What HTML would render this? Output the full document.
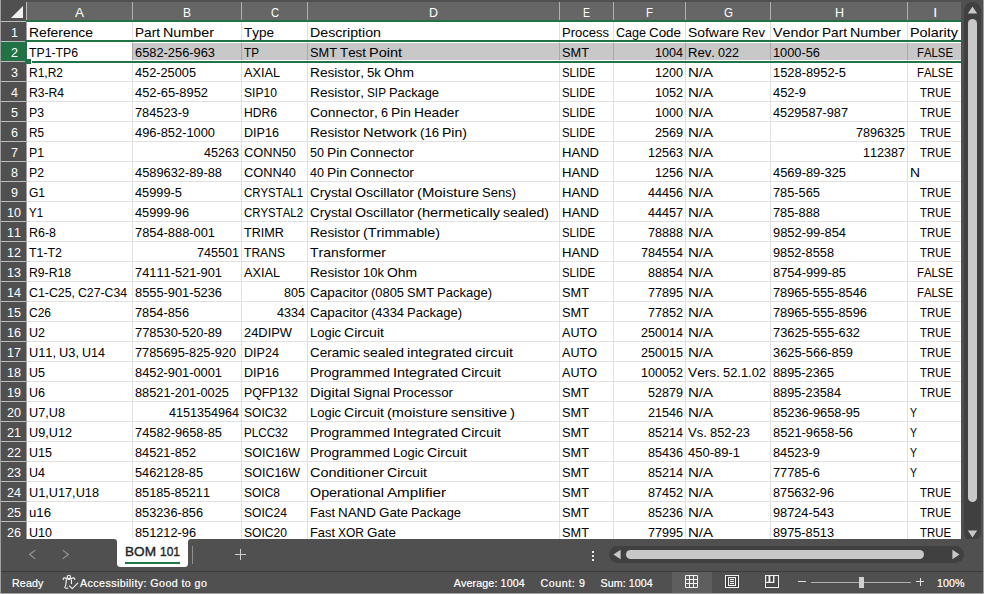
<!DOCTYPE html>
<html lang="en"><head><meta charset="utf-8"><title>BOM 101 - Excel</title>
<style>
html,body{margin:0;padding:0;}
body{width:984px;height:594px;overflow:hidden;position:relative;background:#505050;font-family:"Liberation Sans",sans-serif;}
.abs,.abs *{position:absolute;}
#app{position:absolute;left:0;top:0;width:984px;height:594px;overflow:hidden;background:#505050;}
#app div,#app svg{position:absolute;box-sizing:border-box;}
.ch{top:2px;height:18px;background:#666;color:#fff;font-size:13.4px;line-height:22px;text-align:center;font-kerning:none;}
.rh{left:1px;width:25px;padding-left:1px;height:19px;background:#505050;color:#fff;font-size:13.4px;line-height:21px;text-align:center;font-kerning:none;}
.c{height:19px;line-height:21px;font-size:13.4px;color:#000;white-space:pre;font-kerning:none;word-spacing:-0.719px;}

.w{display:inline-block;transform-origin:0 0;}
.st{color:#fff;-webkit-text-stroke:0.2px #fff;font-size:10.7px;line-height:22px;top:572px;height:22px;white-space:pre;font-kerning:none;}
</style></head><body><div id="app">

<div style="left:27px;top:22px;width:934px;height:517px;background:#fff"></div>
<div class="ch" style="left:27px;width:105px"><span class="w" style="width:9px;transform:scaleX(1.0070)">A</span></div>
<div style="left:132px;top:2px;width:1px;height:18px;background:#b0b0b0"></div>
<div class="ch" style="left:133px;width:108px"><span class="w" style="width:8px;transform:scaleX(0.8951)">B</span></div>
<div style="left:241px;top:2px;width:1px;height:18px;background:#b0b0b0"></div>
<div class="ch" style="left:242px;width:65px"><span class="w" style="width:8px;transform:scaleX(0.8271)">C</span></div>
<div style="left:307px;top:2px;width:1px;height:18px;background:#b0b0b0"></div>
<div class="ch" style="left:308px;width:251px"><span class="w" style="width:9px;transform:scaleX(0.9305)">D</span></div>
<div style="left:559px;top:2px;width:1px;height:18px;background:#b0b0b0"></div>
<div class="ch" style="left:560px;width:53px"><span class="w" style="width:7px;transform:scaleX(0.7832)">E</span></div>
<div style="left:613px;top:2px;width:1px;height:18px;background:#b0b0b0"></div>
<div class="ch" style="left:614px;width:71px"><span class="w" style="width:7px;transform:scaleX(0.8550)">F</span></div>
<div style="left:685px;top:2px;width:1px;height:18px;background:#b0b0b0"></div>
<div class="ch" style="left:686px;width:84px"><span class="w" style="width:9px;transform:scaleX(0.8636)">G</span></div>
<div style="left:770px;top:2px;width:1px;height:18px;background:#b0b0b0"></div>
<div class="ch" style="left:771px;width:136px"><span class="w" style="width:9px;transform:scaleX(0.9305)">H</span></div>
<div style="left:907px;top:2px;width:1px;height:18px;background:#b0b0b0"></div>
<div class="ch" style="left:908px;width:53px"><span class="w" style="width:4px;transform:scaleX(1.0711)">I</span></div>
<div style="left:26px;top:2px;width:1px;height:20px;background:#bdbdbd"></div>
<div style="left:26px;top:22px;width:1px;height:517px;background:#a0a0a0"></div>
<div style="left:1px;top:21px;width:25px;height:1px;background:#bdbdbd"></div>
<svg style="left:10px;top:5px" width="14" height="14" viewBox="0 0 14 14"><polygon points="13,1 13,13 1,13" fill="#f0f0f0"/></svg>
<div style="left:132px;top:43px;width:829px;height:17px;background:#c8c8c8"></div>
<div style="left:132px;top:22px;width:1px;height:517px;background:#e1e1e1"></div>
<div style="left:132px;top:43px;width:1px;height:17px;background:#a8a8a8"></div>
<div style="left:241px;top:22px;width:1px;height:517px;background:#e1e1e1"></div>
<div style="left:241px;top:43px;width:1px;height:17px;background:#a8a8a8"></div>
<div style="left:307px;top:22px;width:1px;height:517px;background:#e1e1e1"></div>
<div style="left:307px;top:43px;width:1px;height:17px;background:#a8a8a8"></div>
<div style="left:559px;top:22px;width:1px;height:517px;background:#e1e1e1"></div>
<div style="left:559px;top:43px;width:1px;height:17px;background:#a8a8a8"></div>
<div style="left:613px;top:22px;width:1px;height:517px;background:#e1e1e1"></div>
<div style="left:613px;top:43px;width:1px;height:17px;background:#a8a8a8"></div>
<div style="left:685px;top:22px;width:1px;height:517px;background:#e1e1e1"></div>
<div style="left:685px;top:43px;width:1px;height:17px;background:#a8a8a8"></div>
<div style="left:770px;top:22px;width:1px;height:517px;background:#e1e1e1"></div>
<div style="left:770px;top:43px;width:1px;height:17px;background:#a8a8a8"></div>
<div style="left:907px;top:22px;width:1px;height:517px;background:#e1e1e1"></div>
<div style="left:907px;top:43px;width:1px;height:17px;background:#a8a8a8"></div>
<div class="rh" style="top:22px;background:#505050"><span class="w" style="width:7px;transform:scaleX(0.9392)">1</span></div>
<div style="left:1px;top:41px;width:25px;height:1px;background:#bdbdbd"></div>
<div style="left:27px;top:41px;width:934px;height:1px;background:#e1e1e1"></div>
<div class="rh" style="top:42px;background:#217346"><span class="w" style="width:7px;transform:scaleX(0.9392)">2</span></div>
<div style="left:1px;top:61px;width:25px;height:1px;background:#bdbdbd"></div>
<div style="left:27px;top:61px;width:934px;height:1px;background:#e1e1e1"></div>
<div class="rh" style="top:62px;background:#505050"><span class="w" style="width:7px;transform:scaleX(0.9392)">3</span></div>
<div style="left:1px;top:81px;width:25px;height:1px;background:#bdbdbd"></div>
<div style="left:27px;top:81px;width:934px;height:1px;background:#e1e1e1"></div>
<div class="rh" style="top:82px;background:#505050"><span class="w" style="width:7px;transform:scaleX(0.9392)">4</span></div>
<div style="left:1px;top:101px;width:25px;height:1px;background:#bdbdbd"></div>
<div style="left:27px;top:101px;width:934px;height:1px;background:#e1e1e1"></div>
<div class="rh" style="top:102px;background:#505050"><span class="w" style="width:7px;transform:scaleX(0.9392)">5</span></div>
<div style="left:1px;top:121px;width:25px;height:1px;background:#bdbdbd"></div>
<div style="left:27px;top:121px;width:934px;height:1px;background:#e1e1e1"></div>
<div class="rh" style="top:122px;background:#505050"><span class="w" style="width:7px;transform:scaleX(0.9392)">6</span></div>
<div style="left:1px;top:141px;width:25px;height:1px;background:#bdbdbd"></div>
<div style="left:27px;top:141px;width:934px;height:1px;background:#e1e1e1"></div>
<div class="rh" style="top:142px;background:#505050"><span class="w" style="width:7px;transform:scaleX(0.9392)">7</span></div>
<div style="left:1px;top:161px;width:25px;height:1px;background:#bdbdbd"></div>
<div style="left:27px;top:161px;width:934px;height:1px;background:#e1e1e1"></div>
<div class="rh" style="top:162px;background:#505050"><span class="w" style="width:7px;transform:scaleX(0.9392)">8</span></div>
<div style="left:1px;top:181px;width:25px;height:1px;background:#bdbdbd"></div>
<div style="left:27px;top:181px;width:934px;height:1px;background:#e1e1e1"></div>
<div class="rh" style="top:182px;background:#505050"><span class="w" style="width:7px;transform:scaleX(0.9392)">9</span></div>
<div style="left:1px;top:201px;width:25px;height:1px;background:#bdbdbd"></div>
<div style="left:27px;top:201px;width:934px;height:1px;background:#e1e1e1"></div>
<div class="rh" style="top:202px;background:#505050"><span class="w" style="width:14px;transform:scaleX(0.9392)">10</span></div>
<div style="left:1px;top:221px;width:25px;height:1px;background:#bdbdbd"></div>
<div style="left:27px;top:221px;width:934px;height:1px;background:#e1e1e1"></div>
<div class="rh" style="top:222px;background:#505050"><span class="w" style="width:14px;transform:scaleX(0.9392)">11</span></div>
<div style="left:1px;top:241px;width:25px;height:1px;background:#bdbdbd"></div>
<div style="left:27px;top:241px;width:934px;height:1px;background:#e1e1e1"></div>
<div class="rh" style="top:242px;background:#505050"><span class="w" style="width:14px;transform:scaleX(0.9392)">12</span></div>
<div style="left:1px;top:261px;width:25px;height:1px;background:#bdbdbd"></div>
<div style="left:27px;top:261px;width:934px;height:1px;background:#e1e1e1"></div>
<div class="rh" style="top:262px;background:#505050"><span class="w" style="width:14px;transform:scaleX(0.9392)">13</span></div>
<div style="left:1px;top:281px;width:25px;height:1px;background:#bdbdbd"></div>
<div style="left:27px;top:281px;width:934px;height:1px;background:#e1e1e1"></div>
<div class="rh" style="top:282px;background:#505050"><span class="w" style="width:14px;transform:scaleX(0.9392)">14</span></div>
<div style="left:1px;top:301px;width:25px;height:1px;background:#bdbdbd"></div>
<div style="left:27px;top:301px;width:934px;height:1px;background:#e1e1e1"></div>
<div class="rh" style="top:302px;background:#505050"><span class="w" style="width:14px;transform:scaleX(0.9392)">15</span></div>
<div style="left:1px;top:321px;width:25px;height:1px;background:#bdbdbd"></div>
<div style="left:27px;top:321px;width:934px;height:1px;background:#e1e1e1"></div>
<div class="rh" style="top:322px;background:#505050"><span class="w" style="width:14px;transform:scaleX(0.9392)">16</span></div>
<div style="left:1px;top:341px;width:25px;height:1px;background:#bdbdbd"></div>
<div style="left:27px;top:341px;width:934px;height:1px;background:#e1e1e1"></div>
<div class="rh" style="top:342px;background:#505050"><span class="w" style="width:14px;transform:scaleX(0.9392)">17</span></div>
<div style="left:1px;top:361px;width:25px;height:1px;background:#bdbdbd"></div>
<div style="left:27px;top:361px;width:934px;height:1px;background:#e1e1e1"></div>
<div class="rh" style="top:362px;background:#505050"><span class="w" style="width:14px;transform:scaleX(0.9392)">18</span></div>
<div style="left:1px;top:381px;width:25px;height:1px;background:#bdbdbd"></div>
<div style="left:27px;top:381px;width:934px;height:1px;background:#e1e1e1"></div>
<div class="rh" style="top:382px;background:#505050"><span class="w" style="width:14px;transform:scaleX(0.9392)">19</span></div>
<div style="left:1px;top:401px;width:25px;height:1px;background:#bdbdbd"></div>
<div style="left:27px;top:401px;width:934px;height:1px;background:#e1e1e1"></div>
<div class="rh" style="top:402px;background:#505050"><span class="w" style="width:14px;transform:scaleX(0.9392)">20</span></div>
<div style="left:1px;top:421px;width:25px;height:1px;background:#bdbdbd"></div>
<div style="left:27px;top:421px;width:934px;height:1px;background:#e1e1e1"></div>
<div class="rh" style="top:422px;background:#505050"><span class="w" style="width:14px;transform:scaleX(0.9392)">21</span></div>
<div style="left:1px;top:441px;width:25px;height:1px;background:#bdbdbd"></div>
<div style="left:27px;top:441px;width:934px;height:1px;background:#e1e1e1"></div>
<div class="rh" style="top:442px;background:#505050"><span class="w" style="width:14px;transform:scaleX(0.9392)">22</span></div>
<div style="left:1px;top:461px;width:25px;height:1px;background:#bdbdbd"></div>
<div style="left:27px;top:461px;width:934px;height:1px;background:#e1e1e1"></div>
<div class="rh" style="top:462px;background:#505050"><span class="w" style="width:14px;transform:scaleX(0.9392)">23</span></div>
<div style="left:1px;top:481px;width:25px;height:1px;background:#bdbdbd"></div>
<div style="left:27px;top:481px;width:934px;height:1px;background:#e1e1e1"></div>
<div class="rh" style="top:482px;background:#505050"><span class="w" style="width:14px;transform:scaleX(0.9392)">24</span></div>
<div style="left:1px;top:501px;width:25px;height:1px;background:#bdbdbd"></div>
<div style="left:27px;top:501px;width:934px;height:1px;background:#e1e1e1"></div>
<div class="rh" style="top:502px;background:#505050"><span class="w" style="width:14px;transform:scaleX(0.9392)">25</span></div>
<div style="left:1px;top:521px;width:25px;height:1px;background:#bdbdbd"></div>
<div style="left:27px;top:521px;width:934px;height:1px;background:#e1e1e1"></div>
<div class="rh" style="top:522px;background:#505050"><span class="w" style="width:14px;transform:scaleX(0.9392)">26</span></div>
<div style="left:1px;top:541px;width:25px;height:1px;background:#bdbdbd"></div>
<div style="left:27px;top:541px;width:934px;height:1px;background:#e1e1e1"></div>
<div class="c" style="left:27px;top:22px;width:105px;text-align:left;padding-left:2px;"><span class="w" style="width:64px;transform:scaleX(1.0357)">Reference</span></div>
<div class="c" style="left:133px;top:22px;width:108px;text-align:left;padding-left:2px;"><span class="w" style="width:25px;transform:scaleX(1.0178)">Part</span> <span class="w" style="width:51px;transform:scaleX(1.0705)">Number</span></div>
<div class="c" style="left:242px;top:22px;width:65px;text-align:left;padding-left:2px;"><span class="w" style="width:30px;transform:scaleX(1.0073)">Type</span></div>
<div class="c" style="left:308px;top:22px;width:251px;text-align:left;padding-left:2px;"><span class="w" style="width:71px;transform:scaleX(1.0599)">Description</span></div>
<div class="c" style="left:560px;top:22px;width:53px;text-align:left;padding-left:2px;"><span class="w" style="width:47px;transform:scaleX(0.9716)">Process</span></div>
<div class="c" style="left:614px;top:22px;width:71px;text-align:left;padding-left:2px;"><span class="w" style="width:30px;transform:scaleX(0.9370)">Cage</span> <span class="w" style="width:32px;transform:scaleX(0.9995)">Code</span></div>
<div class="c" style="left:686px;top:22px;width:84px;text-align:left;padding-left:2px;"><span class="w" style="width:51px;transform:scaleX(1.0382)">Sofware</span> <span class="w" style="width:23px;transform:scaleX(0.9652)">Rev</span></div>
<div class="c" style="left:771px;top:22px;width:136px;text-align:left;padding-left:2px;"><span class="w" style="width:46px;transform:scaleX(1.0651)">Vendor</span> <span class="w" style="width:25px;transform:scaleX(1.0178)">Part</span> <span class="w" style="width:51px;transform:scaleX(1.0705)">Number</span></div>
<div class="c" style="left:908px;top:22px;width:53px;text-align:left;padding-left:2px;"><span class="w" style="width:48px;transform:scaleX(1.0749)">Polarity</span></div>
<div class="c" style="left:27px;top:42px;width:105px;text-align:left;padding-left:2px;"><span class="w" style="width:49px;transform:scaleX(0.9146)">TP1-TP6</span></div>
<div class="c" style="left:133px;top:42px;width:108px;text-align:left;padding-left:2px;"><span class="w" style="width:80px;transform:scaleX(0.9592)">6582-256-963</span></div>
<div class="c" style="left:242px;top:42px;width:65px;text-align:left;padding-left:2px;"><span class="w" style="width:15px;transform:scaleX(0.8759)">TP</span></div>
<div class="c" style="left:308px;top:42px;width:251px;text-align:left;padding-left:2px;"><span class="w" style="width:27px;transform:scaleX(0.9552)">SMT</span> <span class="w" style="width:26px;transform:scaleX(0.9982)">Test</span> <span class="w" style="width:33px;transform:scaleX(1.0809)">Point</span></div>
<div class="c" style="left:560px;top:42px;width:53px;text-align:left;padding-left:2px;"><span class="w" style="width:27px;transform:scaleX(0.9552)">SMT</span></div>
<div class="c" style="left:614px;top:42px;width:71px;text-align:right;padding-right:2px;"><span class="w" style="width:28px;transform:scaleX(0.9397)">1004</span></div>
<div class="c" style="left:686px;top:42px;width:84px;text-align:left;padding-left:2px;"><span class="w" style="width:27px;transform:scaleX(0.9801)">Rev.</span> <span class="w" style="width:21px;transform:scaleX(0.9399)">022</span></div>
<div class="c" style="left:771px;top:42px;width:136px;text-align:left;padding-left:2px;"><span class="w" style="width:47px;transform:scaleX(0.9561)">1000-56</span></div>
<div class="c" style="left:908px;top:42px;width:53px;text-align:center;padding-left:1px;"><span class="w" style="width:36px;transform:scaleX(0.8486)">FALSE</span></div>
<div class="c" style="left:27px;top:62px;width:105px;text-align:left;padding-left:2px;"><span class="w" style="width:34px;transform:scaleX(0.8955)">R1,R2</span></div>
<div class="c" style="left:133px;top:62px;width:108px;text-align:left;padding-left:2px;"><span class="w" style="width:61px;transform:scaleX(0.9524)">452-25005</span></div>
<div class="c" style="left:242px;top:62px;width:65px;text-align:left;padding-left:2px;"><span class="w" style="width:36px;transform:scaleX(0.9481)">AXIAL</span></div>
<div class="c" style="left:308px;top:62px;width:251px;text-align:left;padding-left:2px;"><span class="w" style="width:54px;transform:scaleX(1.0219)">Resistor,</span> <span class="w" style="width:14px;transform:scaleX(0.9890)">5k</span> <span class="w" style="width:30px;transform:scaleX(1.0334)">Ohm</span></div>
<div class="c" style="left:560px;top:62px;width:53px;text-align:left;padding-left:2px;"><span class="w" style="width:33px;transform:scaleX(0.8526)">SLIDE</span></div>
<div class="c" style="left:614px;top:62px;width:71px;text-align:right;padding-right:2px;"><span class="w" style="width:28px;transform:scaleX(0.9397)">1200</span></div>
<div class="c" style="left:686px;top:62px;width:84px;text-align:left;padding-left:2px;"><span class="w" style="width:25px;transform:scaleX(1.1197)">N/A</span></div>
<div class="c" style="left:771px;top:62px;width:136px;text-align:left;padding-left:2px;"><span class="w" style="width:73px;transform:scaleX(0.9611)">1528-8952-5</span></div>
<div class="c" style="left:908px;top:62px;width:53px;text-align:center;padding-left:1px;"><span class="w" style="width:36px;transform:scaleX(0.8486)">FALSE</span></div>
<div class="c" style="left:27px;top:82px;width:105px;text-align:left;padding-left:2px;"><span class="w" style="width:35px;transform:scaleX(0.9043)">R3-R4</span></div>
<div class="c" style="left:133px;top:82px;width:108px;text-align:left;padding-left:2px;"><span class="w" style="width:73px;transform:scaleX(0.9611)">452-65-8952</span></div>
<div class="c" style="left:242px;top:82px;width:65px;text-align:left;padding-left:2px;"><span class="w" style="width:33px;transform:scaleX(0.9045)">SIP10</span></div>
<div class="c" style="left:308px;top:82px;width:251px;text-align:left;padding-left:2px;"><span class="w" style="width:54px;transform:scaleX(1.0219)">Resistor,</span> <span class="w" style="width:19px;transform:scaleX(0.8799)">SIP</span> <span class="w" style="width:50px;transform:scaleX(0.9592)">Package</span></div>
<div class="c" style="left:560px;top:82px;width:53px;text-align:left;padding-left:2px;"><span class="w" style="width:33px;transform:scaleX(0.8526)">SLIDE</span></div>
<div class="c" style="left:614px;top:82px;width:71px;text-align:right;padding-right:2px;"><span class="w" style="width:28px;transform:scaleX(0.9397)">1052</span></div>
<div class="c" style="left:686px;top:82px;width:84px;text-align:left;padding-left:2px;"><span class="w" style="width:25px;transform:scaleX(1.1197)">N/A</span></div>
<div class="c" style="left:771px;top:82px;width:136px;text-align:left;padding-left:2px;"><span class="w" style="width:33px;transform:scaleX(0.9635)">452-9</span></div>
<div class="c" style="left:908px;top:82px;width:53px;text-align:center;padding-left:1px;"><span class="w" style="width:31px;transform:scaleX(0.8504)">TRUE</span></div>
<div class="c" style="left:27px;top:102px;width:105px;text-align:left;padding-left:2px;"><span class="w" style="width:15px;transform:scaleX(0.9152)">P3</span></div>
<div class="c" style="left:133px;top:102px;width:108px;text-align:left;padding-left:2px;"><span class="w" style="width:54px;transform:scaleX(0.9542)">784523-9</span></div>
<div class="c" style="left:242px;top:102px;width:65px;text-align:left;padding-left:2px;"><span class="w" style="width:33px;transform:scaleX(0.9049)">HDR6</span></div>
<div class="c" style="left:308px;top:102px;width:251px;text-align:left;padding-left:2px;"><span class="w" style="width:68px;transform:scaleX(1.0379)">Connector,</span> <span class="w" style="width:7px;transform:scaleX(0.9392)">6</span> <span class="w" style="width:20px;transform:scaleX(1.0331)">Pin</span> <span class="w" style="width:45px;transform:scaleX(1.0245)">Header</span></div>
<div class="c" style="left:560px;top:102px;width:53px;text-align:left;padding-left:2px;"><span class="w" style="width:33px;transform:scaleX(0.8526)">SLIDE</span></div>
<div class="c" style="left:614px;top:102px;width:71px;text-align:right;padding-right:2px;"><span class="w" style="width:28px;transform:scaleX(0.9397)">1000</span></div>
<div class="c" style="left:686px;top:102px;width:84px;text-align:left;padding-left:2px;"><span class="w" style="width:25px;transform:scaleX(1.1197)">N/A</span></div>
<div class="c" style="left:771px;top:102px;width:136px;text-align:left;padding-left:2px;"><span class="w" style="width:75px;transform:scaleX(0.9501)">4529587-987</span></div>
<div class="c" style="left:908px;top:102px;width:53px;text-align:center;padding-left:1px;"><span class="w" style="width:31px;transform:scaleX(0.8504)">TRUE</span></div>
<div class="c" style="left:27px;top:122px;width:105px;text-align:left;padding-left:2px;"><span class="w" style="width:15px;transform:scaleX(0.8759)">R5</span></div>
<div class="c" style="left:133px;top:122px;width:108px;text-align:left;padding-left:2px;"><span class="w" style="width:80px;transform:scaleX(0.9592)">496-852-1000</span></div>
<div class="c" style="left:242px;top:122px;width:65px;text-align:left;padding-left:2px;"><span class="w" style="width:35px;transform:scaleX(0.9404)">DIP16</span></div>
<div class="c" style="left:308px;top:122px;width:251px;text-align:left;padding-left:2px;"><span class="w" style="width:50px;transform:scaleX(1.0178)">Resistor</span> <span class="w" style="width:54px;transform:scaleX(1.0992)">Network</span> <span class="w" style="width:19px;transform:scaleX(0.9814)">(16</span> <span class="w" style="width:25px;transform:scaleX(1.0492)">Pin)</span></div>
<div class="c" style="left:560px;top:122px;width:53px;text-align:left;padding-left:2px;"><span class="w" style="width:33px;transform:scaleX(0.8526)">SLIDE</span></div>
<div class="c" style="left:614px;top:122px;width:71px;text-align:right;padding-right:2px;"><span class="w" style="width:28px;transform:scaleX(0.9397)">2569</span></div>
<div class="c" style="left:686px;top:122px;width:84px;text-align:left;padding-left:2px;"><span class="w" style="width:25px;transform:scaleX(1.1197)">N/A</span></div>
<div class="c" style="left:771px;top:122px;width:136px;text-align:right;padding-right:2px;"><span class="w" style="width:49px;transform:scaleX(0.9398)">7896325</span></div>
<div class="c" style="left:908px;top:122px;width:53px;text-align:center;padding-left:1px;"><span class="w" style="width:31px;transform:scaleX(0.8504)">TRUE</span></div>
<div class="c" style="left:27px;top:142px;width:105px;text-align:left;padding-left:2px;"><span class="w" style="width:15px;transform:scaleX(0.9152)">P1</span></div>
<div class="c" style="left:133px;top:142px;width:108px;text-align:right;padding-right:2px;"><span class="w" style="width:35px;transform:scaleX(0.9396)">45263</span></div>
<div class="c" style="left:242px;top:142px;width:65px;text-align:left;padding-left:2px;"><span class="w" style="width:52px;transform:scaleX(0.9571)">CONN50</span></div>
<div class="c" style="left:308px;top:142px;width:251px;text-align:left;padding-left:2px;"><span class="w" style="width:14px;transform:scaleX(0.9392)">50</span> <span class="w" style="width:20px;transform:scaleX(1.0331)">Pin</span> <span class="w" style="width:64px;transform:scaleX(1.0357)">Connector</span></div>
<div class="c" style="left:560px;top:142px;width:53px;text-align:left;padding-left:2px;"><span class="w" style="width:37px;transform:scaleX(0.9749)">HAND</span></div>
<div class="c" style="left:614px;top:142px;width:71px;text-align:right;padding-right:2px;"><span class="w" style="width:35px;transform:scaleX(0.9396)">12563</span></div>
<div class="c" style="left:686px;top:142px;width:84px;text-align:left;padding-left:2px;"><span class="w" style="width:25px;transform:scaleX(1.1197)">N/A</span></div>
<div class="c" style="left:771px;top:142px;width:136px;text-align:right;padding-right:2px;"><span class="w" style="width:42px;transform:scaleX(0.9399)">112387</span></div>
<div class="c" style="left:908px;top:142px;width:53px;text-align:center;padding-left:1px;"><span class="w" style="width:31px;transform:scaleX(0.8504)">TRUE</span></div>
<div class="c" style="left:27px;top:162px;width:105px;text-align:left;padding-left:2px;"><span class="w" style="width:15px;transform:scaleX(0.9152)">P2</span></div>
<div class="c" style="left:133px;top:162px;width:108px;text-align:left;padding-left:2px;"><span class="w" style="width:87px;transform:scaleX(0.9577)">4589632-89-88</span></div>
<div class="c" style="left:242px;top:162px;width:65px;text-align:left;padding-left:2px;"><span class="w" style="width:52px;transform:scaleX(0.9571)">CONN40</span></div>
<div class="c" style="left:308px;top:162px;width:251px;text-align:left;padding-left:2px;"><span class="w" style="width:14px;transform:scaleX(0.9392)">40</span> <span class="w" style="width:20px;transform:scaleX(1.0331)">Pin</span> <span class="w" style="width:64px;transform:scaleX(1.0357)">Connector</span></div>
<div class="c" style="left:560px;top:162px;width:53px;text-align:left;padding-left:2px;"><span class="w" style="width:37px;transform:scaleX(0.9749)">HAND</span></div>
<div class="c" style="left:614px;top:162px;width:71px;text-align:right;padding-right:2px;"><span class="w" style="width:28px;transform:scaleX(0.9397)">1256</span></div>
<div class="c" style="left:686px;top:162px;width:84px;text-align:left;padding-left:2px;"><span class="w" style="width:25px;transform:scaleX(1.1197)">N/A</span></div>
<div class="c" style="left:771px;top:162px;width:136px;text-align:left;padding-left:2px;"><span class="w" style="width:73px;transform:scaleX(0.9611)">4569-89-325</span></div>
<div class="c" style="left:908px;top:162px;width:53px;text-align:left;padding-left:2px;"><span class="w" style="width:10px;transform:scaleX(1.0339)">N</span></div>
<div class="c" style="left:27px;top:182px;width:105px;text-align:left;padding-left:2px;"><span class="w" style="width:16px;transform:scaleX(0.8951)">G1</span></div>
<div class="c" style="left:133px;top:182px;width:108px;text-align:left;padding-left:2px;"><span class="w" style="width:47px;transform:scaleX(0.9561)">45999-5</span></div>
<div class="c" style="left:242px;top:182px;width:65px;text-align:left;padding-left:2px;"><span class="w" style="width:59px;transform:scaleX(0.8524)">CRYSTAL1</span></div>
<div class="c" style="left:308px;top:182px;width:251px;text-align:left;padding-left:2px;"><span class="w" style="width:42px;transform:scaleX(1.0079)">Crystal</span> <span class="w" style="width:59px;transform:scaleX(1.0571)">Oscillator</span> <span class="w" style="width:62px;transform:scaleX(1.1109)">(Moisture</span> <span class="w" style="width:34px;transform:scaleX(0.9719)">Sens)</span></div>
<div class="c" style="left:560px;top:182px;width:53px;text-align:left;padding-left:2px;"><span class="w" style="width:37px;transform:scaleX(0.9749)">HAND</span></div>
<div class="c" style="left:614px;top:182px;width:71px;text-align:right;padding-right:2px;"><span class="w" style="width:35px;transform:scaleX(0.9396)">44456</span></div>
<div class="c" style="left:686px;top:182px;width:84px;text-align:left;padding-left:2px;"><span class="w" style="width:25px;transform:scaleX(1.1197)">N/A</span></div>
<div class="c" style="left:771px;top:182px;width:136px;text-align:left;padding-left:2px;"><span class="w" style="width:47px;transform:scaleX(0.9561)">785-565</span></div>
<div class="c" style="left:908px;top:182px;width:53px;text-align:center;padding-left:1px;"><span class="w" style="width:31px;transform:scaleX(0.8504)">TRUE</span></div>
<div class="c" style="left:27px;top:202px;width:105px;text-align:left;padding-left:2px;"><span class="w" style="width:14px;transform:scaleX(0.8541)">Y1</span></div>
<div class="c" style="left:133px;top:202px;width:108px;text-align:left;padding-left:2px;"><span class="w" style="width:54px;transform:scaleX(0.9542)">45999-96</span></div>
<div class="c" style="left:242px;top:202px;width:65px;text-align:left;padding-left:2px;"><span class="w" style="width:59px;transform:scaleX(0.8524)">CRYSTAL2</span></div>
<div class="c" style="left:308px;top:202px;width:251px;text-align:left;padding-left:2px;"><span class="w" style="width:42px;transform:scaleX(1.0079)">Crystal</span> <span class="w" style="width:59px;transform:scaleX(1.0571)">Oscillator</span> <span class="w" style="width:83px;transform:scaleX(1.0935)">(hermetically</span> <span class="w" style="width:46px;transform:scaleX(1.0473)">sealed)</span></div>
<div class="c" style="left:560px;top:202px;width:53px;text-align:left;padding-left:2px;"><span class="w" style="width:37px;transform:scaleX(0.9749)">HAND</span></div>
<div class="c" style="left:614px;top:202px;width:71px;text-align:right;padding-right:2px;"><span class="w" style="width:35px;transform:scaleX(0.9396)">44457</span></div>
<div class="c" style="left:686px;top:202px;width:84px;text-align:left;padding-left:2px;"><span class="w" style="width:25px;transform:scaleX(1.1197)">N/A</span></div>
<div class="c" style="left:771px;top:202px;width:136px;text-align:left;padding-left:2px;"><span class="w" style="width:47px;transform:scaleX(0.9561)">785-888</span></div>
<div class="c" style="left:908px;top:202px;width:53px;text-align:center;padding-left:1px;"><span class="w" style="width:31px;transform:scaleX(0.8504)">TRUE</span></div>
<div class="c" style="left:27px;top:222px;width:105px;text-align:left;padding-left:2px;"><span class="w" style="width:27px;transform:scaleX(0.9300)">R6-8</span></div>
<div class="c" style="left:133px;top:222px;width:108px;text-align:left;padding-left:2px;"><span class="w" style="width:80px;transform:scaleX(0.9592)">7854-888-001</span></div>
<div class="c" style="left:242px;top:222px;width:65px;text-align:left;padding-left:2px;"><span class="w" style="width:40px;transform:scaleX(0.9433)">TRIMR</span></div>
<div class="c" style="left:308px;top:222px;width:251px;text-align:left;padding-left:2px;"><span class="w" style="width:50px;transform:scaleX(1.0178)">Resistor</span> <span class="w" style="width:77px;transform:scaleX(1.0669)">(Trimmable)</span></div>
<div class="c" style="left:560px;top:222px;width:53px;text-align:left;padding-left:2px;"><span class="w" style="width:33px;transform:scaleX(0.8526)">SLIDE</span></div>
<div class="c" style="left:614px;top:222px;width:71px;text-align:right;padding-right:2px;"><span class="w" style="width:35px;transform:scaleX(0.9396)">78888</span></div>
<div class="c" style="left:686px;top:222px;width:84px;text-align:left;padding-left:2px;"><span class="w" style="width:25px;transform:scaleX(1.1197)">N/A</span></div>
<div class="c" style="left:771px;top:222px;width:136px;text-align:left;padding-left:2px;"><span class="w" style="width:73px;transform:scaleX(0.9611)">9852-99-854</span></div>
<div class="c" style="left:908px;top:222px;width:53px;text-align:center;padding-left:1px;"><span class="w" style="width:31px;transform:scaleX(0.8504)">TRUE</span></div>
<div class="c" style="left:27px;top:242px;width:105px;text-align:left;padding-left:2px;"><span class="w" style="width:33px;transform:scaleX(0.9239)">T1-T2</span></div>
<div class="c" style="left:133px;top:242px;width:108px;text-align:right;padding-right:2px;"><span class="w" style="width:42px;transform:scaleX(0.9399)">745501</span></div>
<div class="c" style="left:242px;top:242px;width:65px;text-align:left;padding-left:2px;"><span class="w" style="width:41px;transform:scaleX(0.9033)">TRANS</span></div>
<div class="c" style="left:308px;top:242px;width:251px;text-align:left;padding-left:2px;"><span class="w" style="width:76px;transform:scaleX(1.0422)">Transformer</span></div>
<div class="c" style="left:560px;top:242px;width:53px;text-align:left;padding-left:2px;"><span class="w" style="width:37px;transform:scaleX(0.9749)">HAND</span></div>
<div class="c" style="left:614px;top:242px;width:71px;text-align:right;padding-right:2px;"><span class="w" style="width:42px;transform:scaleX(0.9399)">784554</span></div>
<div class="c" style="left:686px;top:242px;width:84px;text-align:left;padding-left:2px;"><span class="w" style="width:25px;transform:scaleX(1.1197)">N/A</span></div>
<div class="c" style="left:771px;top:242px;width:136px;text-align:left;padding-left:2px;"><span class="w" style="width:61px;transform:scaleX(0.9524)">9852-8558</span></div>
<div class="c" style="left:908px;top:242px;width:53px;text-align:center;padding-left:1px;"><span class="w" style="width:31px;transform:scaleX(0.8504)">TRUE</span></div>
<div class="c" style="left:27px;top:262px;width:105px;text-align:left;padding-left:2px;"><span class="w" style="width:42px;transform:scaleX(0.9100)">R9-R18</span></div>
<div class="c" style="left:133px;top:262px;width:108px;text-align:left;padding-left:2px;"><span class="w" style="width:87px;transform:scaleX(0.9577)">74111-521-901</span></div>
<div class="c" style="left:242px;top:262px;width:65px;text-align:left;padding-left:2px;"><span class="w" style="width:36px;transform:scaleX(0.9481)">AXIAL</span></div>
<div class="c" style="left:308px;top:262px;width:251px;text-align:left;padding-left:2px;"><span class="w" style="width:50px;transform:scaleX(1.0178)">Resistor</span> <span class="w" style="width:21px;transform:scaleX(0.9725)">10k</span> <span class="w" style="width:30px;transform:scaleX(1.0334)">Ohm</span></div>
<div class="c" style="left:560px;top:262px;width:53px;text-align:left;padding-left:2px;"><span class="w" style="width:33px;transform:scaleX(0.8526)">SLIDE</span></div>
<div class="c" style="left:614px;top:262px;width:71px;text-align:right;padding-right:2px;"><span class="w" style="width:35px;transform:scaleX(0.9396)">88854</span></div>
<div class="c" style="left:686px;top:262px;width:84px;text-align:left;padding-left:2px;"><span class="w" style="width:25px;transform:scaleX(1.1197)">N/A</span></div>
<div class="c" style="left:771px;top:262px;width:136px;text-align:left;padding-left:2px;"><span class="w" style="width:73px;transform:scaleX(0.9611)">8754-999-85</span></div>
<div class="c" style="left:908px;top:262px;width:53px;text-align:center;padding-left:1px;"><span class="w" style="width:36px;transform:scaleX(0.8486)">FALSE</span></div>
<div class="c" style="left:27px;top:282px;width:105px;text-align:left;padding-left:2px;"><span class="w" style="width:46px;transform:scaleX(0.9223)">C1-C25,</span> <span class="w" style="width:49px;transform:scaleX(0.9143)">C27-C34</span></div>
<div class="c" style="left:133px;top:282px;width:108px;text-align:left;padding-left:2px;"><span class="w" style="width:87px;transform:scaleX(0.9577)">8555-901-5236</span></div>
<div class="c" style="left:242px;top:282px;width:65px;text-align:right;padding-right:2px;"><span class="w" style="width:21px;transform:scaleX(0.9399)">805</span></div>
<div class="c" style="left:308px;top:282px;width:251px;text-align:left;padding-left:2px;"><span class="w" style="width:58px;transform:scaleX(1.0120)">Capacitor</span> <span class="w" style="width:33px;transform:scaleX(0.9635)">(0805</span> <span class="w" style="width:27px;transform:scaleX(0.9552)">SMT</span> <span class="w" style="width:55px;transform:scaleX(0.9721)">Package)</span></div>
<div class="c" style="left:560px;top:282px;width:53px;text-align:left;padding-left:2px;"><span class="w" style="width:27px;transform:scaleX(0.9552)">SMT</span></div>
<div class="c" style="left:614px;top:282px;width:71px;text-align:right;padding-right:2px;"><span class="w" style="width:35px;transform:scaleX(0.9396)">77895</span></div>
<div class="c" style="left:686px;top:282px;width:84px;text-align:left;padding-left:2px;"><span class="w" style="width:25px;transform:scaleX(1.1197)">N/A</span></div>
<div class="c" style="left:771px;top:282px;width:136px;text-align:left;padding-left:2px;"><span class="w" style="width:94px;transform:scaleX(0.9563)">78965-555-8546</span></div>
<div class="c" style="left:908px;top:282px;width:53px;text-align:center;padding-left:1px;"><span class="w" style="width:36px;transform:scaleX(0.8486)">FALSE</span></div>
<div class="c" style="left:27px;top:302px;width:105px;text-align:left;padding-left:2px;"><span class="w" style="width:22px;transform:scaleX(0.8951)">C26</span></div>
<div class="c" style="left:133px;top:302px;width:108px;text-align:left;padding-left:2px;"><span class="w" style="width:54px;transform:scaleX(0.9542)">7854-856</span></div>
<div class="c" style="left:242px;top:302px;width:65px;text-align:right;padding-right:2px;"><span class="w" style="width:28px;transform:scaleX(0.9397)">4334</span></div>
<div class="c" style="left:308px;top:302px;width:251px;text-align:left;padding-left:2px;"><span class="w" style="width:58px;transform:scaleX(1.0120)">Capacitor</span> <span class="w" style="width:33px;transform:scaleX(0.9635)">(4334</span> <span class="w" style="width:55px;transform:scaleX(0.9721)">Package)</span></div>
<div class="c" style="left:560px;top:302px;width:53px;text-align:left;padding-left:2px;"><span class="w" style="width:27px;transform:scaleX(0.9552)">SMT</span></div>
<div class="c" style="left:614px;top:302px;width:71px;text-align:right;padding-right:2px;"><span class="w" style="width:35px;transform:scaleX(0.9396)">77852</span></div>
<div class="c" style="left:686px;top:302px;width:84px;text-align:left;padding-left:2px;"><span class="w" style="width:25px;transform:scaleX(1.1197)">N/A</span></div>
<div class="c" style="left:771px;top:302px;width:136px;text-align:left;padding-left:2px;"><span class="w" style="width:94px;transform:scaleX(0.9563)">78965-555-8596</span></div>
<div class="c" style="left:908px;top:302px;width:53px;text-align:center;padding-left:1px;"><span class="w" style="width:31px;transform:scaleX(0.8504)">TRUE</span></div>
<div class="c" style="left:27px;top:322px;width:105px;text-align:left;padding-left:2px;"><span class="w" style="width:16px;transform:scaleX(0.9343)">U2</span></div>
<div class="c" style="left:133px;top:322px;width:108px;text-align:left;padding-left:2px;"><span class="w" style="width:87px;transform:scaleX(0.9577)">778530-520-89</span></div>
<div class="c" style="left:242px;top:322px;width:65px;text-align:left;padding-left:2px;"><span class="w" style="width:48px;transform:scaleX(0.9627)">24DIPW</span></div>
<div class="c" style="left:308px;top:322px;width:251px;text-align:left;padding-left:2px;"><span class="w" style="width:31px;transform:scaleX(0.9683)">Logic</span> <span class="w" style="width:40px;transform:scaleX(1.0539)">Circuit</span></div>
<div class="c" style="left:560px;top:322px;width:53px;text-align:left;padding-left:2px;"><span class="w" style="width:35px;transform:scaleX(0.9408)">AUTO</span></div>
<div class="c" style="left:614px;top:322px;width:71px;text-align:right;padding-right:2px;"><span class="w" style="width:42px;transform:scaleX(0.9399)">250014</span></div>
<div class="c" style="left:686px;top:322px;width:84px;text-align:left;padding-left:2px;"><span class="w" style="width:25px;transform:scaleX(1.1197)">N/A</span></div>
<div class="c" style="left:771px;top:322px;width:136px;text-align:left;padding-left:2px;"><span class="w" style="width:87px;transform:scaleX(0.9577)">73625-555-632</span></div>
<div class="c" style="left:908px;top:322px;width:53px;text-align:center;padding-left:1px;"><span class="w" style="width:31px;transform:scaleX(0.8504)">TRUE</span></div>
<div class="c" style="left:27px;top:342px;width:105px;text-align:left;padding-left:2px;"><span class="w" style="width:27px;transform:scaleX(0.9542)">U11,</span> <span class="w" style="width:20px;transform:scaleX(0.9595)">U3,</span> <span class="w" style="width:23px;transform:scaleX(0.9358)">U14</span></div>
<div class="c" style="left:133px;top:342px;width:108px;text-align:left;padding-left:2px;"><span class="w" style="width:101px;transform:scaleX(0.9552)">7785695-825-920</span></div>
<div class="c" style="left:242px;top:342px;width:65px;text-align:left;padding-left:2px;"><span class="w" style="width:35px;transform:scaleX(0.9404)">DIP24</span></div>
<div class="c" style="left:308px;top:342px;width:251px;text-align:left;padding-left:2px;"><span class="w" style="width:50px;transform:scaleX(1.0028)">Ceramic</span> <span class="w" style="width:41px;transform:scaleX(1.0388)">sealed</span> <span class="w" style="width:65px;transform:scaleX(1.0913)">integrated</span> <span class="w" style="width:38px;transform:scaleX(1.0867)">circuit</span></div>
<div class="c" style="left:560px;top:342px;width:53px;text-align:left;padding-left:2px;"><span class="w" style="width:35px;transform:scaleX(0.9408)">AUTO</span></div>
<div class="c" style="left:614px;top:342px;width:71px;text-align:right;padding-right:2px;"><span class="w" style="width:42px;transform:scaleX(0.9399)">250015</span></div>
<div class="c" style="left:686px;top:342px;width:84px;text-align:left;padding-left:2px;"><span class="w" style="width:25px;transform:scaleX(1.1197)">N/A</span></div>
<div class="c" style="left:771px;top:342px;width:136px;text-align:left;padding-left:2px;"><span class="w" style="width:80px;transform:scaleX(0.9592)">3625-566-859</span></div>
<div class="c" style="left:908px;top:342px;width:53px;text-align:center;padding-left:1px;"><span class="w" style="width:31px;transform:scaleX(0.8504)">TRUE</span></div>
<div class="c" style="left:27px;top:362px;width:105px;text-align:left;padding-left:2px;"><span class="w" style="width:16px;transform:scaleX(0.9343)">U5</span></div>
<div class="c" style="left:133px;top:362px;width:108px;text-align:left;padding-left:2px;"><span class="w" style="width:87px;transform:scaleX(0.9577)">8452-901-0001</span></div>
<div class="c" style="left:242px;top:362px;width:65px;text-align:left;padding-left:2px;"><span class="w" style="width:35px;transform:scaleX(0.9404)">DIP16</span></div>
<div class="c" style="left:308px;top:362px;width:251px;text-align:left;padding-left:2px;"><span class="w" style="width:80px;transform:scaleX(1.0335)">Programmed</span> <span class="w" style="width:65px;transform:scaleX(1.0777)">Integrated</span> <span class="w" style="width:40px;transform:scaleX(1.0539)">Circuit</span></div>
<div class="c" style="left:560px;top:362px;width:53px;text-align:left;padding-left:2px;"><span class="w" style="width:35px;transform:scaleX(0.9408)">AUTO</span></div>
<div class="c" style="left:614px;top:362px;width:71px;text-align:right;padding-right:2px;"><span class="w" style="width:42px;transform:scaleX(0.9399)">100052</span></div>
<div class="c" style="left:686px;top:362px;width:84px;text-align:left;padding-left:2px;"><span class="w" style="width:32px;transform:scaleX(1.0235)">Vers.</span> <span class="w" style="width:43px;transform:scaleX(0.9622)">52.1.02</span></div>
<div class="c" style="left:771px;top:362px;width:136px;text-align:left;padding-left:2px;"><span class="w" style="width:61px;transform:scaleX(0.9524)">8895-2365</span></div>
<div class="c" style="left:908px;top:362px;width:53px;text-align:center;padding-left:1px;"><span class="w" style="width:31px;transform:scaleX(0.8504)">TRUE</span></div>
<div class="c" style="left:27px;top:382px;width:105px;text-align:left;padding-left:2px;"><span class="w" style="width:16px;transform:scaleX(0.9343)">U6</span></div>
<div class="c" style="left:133px;top:382px;width:108px;text-align:left;padding-left:2px;"><span class="w" style="width:94px;transform:scaleX(0.9563)">88521-201-0025</span></div>
<div class="c" style="left:242px;top:382px;width:65px;text-align:left;padding-left:2px;"><span class="w" style="width:54px;transform:scaleX(0.9182)">PQFP132</span></div>
<div class="c" style="left:308px;top:382px;width:251px;text-align:left;padding-left:2px;"><span class="w" style="width:40px;transform:scaleX(1.0747)">Digital</span> <span class="w" style="width:37px;transform:scaleX(0.9937)">Signal</span> <span class="w" style="width:60px;transform:scaleX(0.9953)">Processor</span></div>
<div class="c" style="left:560px;top:382px;width:53px;text-align:left;padding-left:2px;"><span class="w" style="width:27px;transform:scaleX(0.9552)">SMT</span></div>
<div class="c" style="left:614px;top:382px;width:71px;text-align:right;padding-right:2px;"><span class="w" style="width:35px;transform:scaleX(0.9396)">52879</span></div>
<div class="c" style="left:686px;top:382px;width:84px;text-align:left;padding-left:2px;"><span class="w" style="width:25px;transform:scaleX(1.1197)">N/A</span></div>
<div class="c" style="left:771px;top:382px;width:136px;text-align:left;padding-left:2px;"><span class="w" style="width:68px;transform:scaleX(0.9513)">8895-23584</span></div>
<div class="c" style="left:908px;top:382px;width:53px;text-align:center;padding-left:1px;"><span class="w" style="width:31px;transform:scaleX(0.8504)">TRUE</span></div>
<div class="c" style="left:27px;top:402px;width:105px;text-align:left;padding-left:2px;"><span class="w" style="width:36px;transform:scaleX(0.9481)">U7,U8</span></div>
<div class="c" style="left:133px;top:402px;width:108px;text-align:right;padding-right:2px;"><span class="w" style="width:70px;transform:scaleX(0.9398)">4151354964</span></div>
<div class="c" style="left:242px;top:402px;width:65px;text-align:left;padding-left:2px;"><span class="w" style="width:43px;transform:scaleX(0.9026)">SOIC32</span></div>
<div class="c" style="left:308px;top:402px;width:251px;text-align:left;padding-left:2px;"><span class="w" style="width:31px;transform:scaleX(0.9683)">Logic</span> <span class="w" style="width:40px;transform:scaleX(1.0539)">Circuit</span> <span class="w" style="width:61px;transform:scaleX(1.0929)">(moisture</span> <span class="w" style="width:56px;transform:scaleX(1.0747)">sensitive</span> <span class="w" style="width:5px;transform:scaleX(1.1189)">)</span></div>
<div class="c" style="left:560px;top:402px;width:53px;text-align:left;padding-left:2px;"><span class="w" style="width:27px;transform:scaleX(0.9552)">SMT</span></div>
<div class="c" style="left:614px;top:402px;width:71px;text-align:right;padding-right:2px;"><span class="w" style="width:35px;transform:scaleX(0.9396)">21546</span></div>
<div class="c" style="left:686px;top:402px;width:84px;text-align:left;padding-left:2px;"><span class="w" style="width:25px;transform:scaleX(1.1197)">N/A</span></div>
<div class="c" style="left:771px;top:402px;width:136px;text-align:left;padding-left:2px;"><span class="w" style="width:87px;transform:scaleX(0.9577)">85236-9658-95</span></div>
<div class="c" style="left:908px;top:402px;width:53px;text-align:left;padding-left:2px;"><span class="w" style="width:7px;transform:scaleX(0.7832)">Y</span></div>
<div class="c" style="left:27px;top:422px;width:105px;text-align:left;padding-left:2px;"><span class="w" style="width:43px;transform:scaleX(0.9470)">U9,U12</span></div>
<div class="c" style="left:133px;top:422px;width:108px;text-align:left;padding-left:2px;"><span class="w" style="width:87px;transform:scaleX(0.9577)">74582-9658-85</span></div>
<div class="c" style="left:242px;top:422px;width:65px;text-align:left;padding-left:2px;"><span class="w" style="width:44px;transform:scaleX(0.8691)">PLCC32</span></div>
<div class="c" style="left:308px;top:422px;width:251px;text-align:left;padding-left:2px;"><span class="w" style="width:80px;transform:scaleX(1.0335)">Programmed</span> <span class="w" style="width:65px;transform:scaleX(1.0777)">Integrated</span> <span class="w" style="width:40px;transform:scaleX(1.0539)">Circuit</span></div>
<div class="c" style="left:560px;top:422px;width:53px;text-align:left;padding-left:2px;"><span class="w" style="width:27px;transform:scaleX(0.9552)">SMT</span></div>
<div class="c" style="left:614px;top:422px;width:71px;text-align:right;padding-right:2px;"><span class="w" style="width:35px;transform:scaleX(0.9396)">85214</span></div>
<div class="c" style="left:686px;top:422px;width:84px;text-align:left;padding-left:2px;"><span class="w" style="width:19px;transform:scaleX(0.9814)">Vs.</span> <span class="w" style="width:40px;transform:scaleX(0.9592)">852-23</span></div>
<div class="c" style="left:771px;top:422px;width:136px;text-align:left;padding-left:2px;"><span class="w" style="width:80px;transform:scaleX(0.9592)">8521-9658-56</span></div>
<div class="c" style="left:908px;top:422px;width:53px;text-align:left;padding-left:2px;"><span class="w" style="width:7px;transform:scaleX(0.7832)">Y</span></div>
<div class="c" style="left:27px;top:442px;width:105px;text-align:left;padding-left:2px;"><span class="w" style="width:23px;transform:scaleX(0.9358)">U15</span></div>
<div class="c" style="left:133px;top:442px;width:108px;text-align:left;padding-left:2px;"><span class="w" style="width:61px;transform:scaleX(0.9524)">84521-852</span></div>
<div class="c" style="left:242px;top:442px;width:65px;text-align:left;padding-left:2px;"><span class="w" style="width:56px;transform:scaleX(0.9290)">SOIC16W</span></div>
<div class="c" style="left:308px;top:442px;width:251px;text-align:left;padding-left:2px;"><span class="w" style="width:80px;transform:scaleX(1.0335)">Programmed</span> <span class="w" style="width:31px;transform:scaleX(0.9683)">Logic</span> <span class="w" style="width:40px;transform:scaleX(1.0539)">Circuit</span></div>
<div class="c" style="left:560px;top:442px;width:53px;text-align:left;padding-left:2px;"><span class="w" style="width:27px;transform:scaleX(0.9552)">SMT</span></div>
<div class="c" style="left:614px;top:442px;width:71px;text-align:right;padding-right:2px;"><span class="w" style="width:35px;transform:scaleX(0.9396)">85436</span></div>
<div class="c" style="left:686px;top:442px;width:84px;text-align:left;padding-left:2px;"><span class="w" style="width:52px;transform:scaleX(0.9700)">450-89-1</span></div>
<div class="c" style="left:771px;top:442px;width:136px;text-align:left;padding-left:2px;"><span class="w" style="width:47px;transform:scaleX(0.9561)">84523-9</span></div>
<div class="c" style="left:908px;top:442px;width:53px;text-align:left;padding-left:2px;"><span class="w" style="width:7px;transform:scaleX(0.7832)">Y</span></div>
<div class="c" style="left:27px;top:462px;width:105px;text-align:left;padding-left:2px;"><span class="w" style="width:16px;transform:scaleX(0.9343)">U4</span></div>
<div class="c" style="left:133px;top:462px;width:108px;text-align:left;padding-left:2px;"><span class="w" style="width:68px;transform:scaleX(0.9513)">5462128-85</span></div>
<div class="c" style="left:242px;top:462px;width:65px;text-align:left;padding-left:2px;"><span class="w" style="width:56px;transform:scaleX(0.9290)">SOIC16W</span></div>
<div class="c" style="left:308px;top:462px;width:251px;text-align:left;padding-left:2px;"><span class="w" style="width:74px;transform:scaleX(1.0805)">Conditioner</span> <span class="w" style="width:40px;transform:scaleX(1.0539)">Circuit</span></div>
<div class="c" style="left:560px;top:462px;width:53px;text-align:left;padding-left:2px;"><span class="w" style="width:27px;transform:scaleX(0.9552)">SMT</span></div>
<div class="c" style="left:614px;top:462px;width:71px;text-align:right;padding-right:2px;"><span class="w" style="width:35px;transform:scaleX(0.9396)">85214</span></div>
<div class="c" style="left:686px;top:462px;width:84px;text-align:left;padding-left:2px;"><span class="w" style="width:25px;transform:scaleX(1.1197)">N/A</span></div>
<div class="c" style="left:771px;top:462px;width:136px;text-align:left;padding-left:2px;"><span class="w" style="width:47px;transform:scaleX(0.9561)">77785-6</span></div>
<div class="c" style="left:908px;top:462px;width:53px;text-align:left;padding-left:2px;"><span class="w" style="width:7px;transform:scaleX(0.7832)">Y</span></div>
<div class="c" style="left:27px;top:482px;width:105px;text-align:left;padding-left:2px;"><span class="w" style="width:70px;transform:scaleX(0.9498)">U1,U17,U18</span></div>
<div class="c" style="left:133px;top:482px;width:108px;text-align:left;padding-left:2px;"><span class="w" style="width:75px;transform:scaleX(0.9501)">85185-85211</span></div>
<div class="c" style="left:242px;top:482px;width:65px;text-align:left;padding-left:2px;"><span class="w" style="width:36px;transform:scaleX(0.8958)">SOIC8</span></div>
<div class="c" style="left:308px;top:482px;width:251px;text-align:left;padding-left:2px;"><span class="w" style="width:74px;transform:scaleX(1.0688)">Operational</span> <span class="w" style="width:59px;transform:scaleX(1.1326)">Amplifier</span></div>
<div class="c" style="left:560px;top:482px;width:53px;text-align:left;padding-left:2px;"><span class="w" style="width:27px;transform:scaleX(0.9552)">SMT</span></div>
<div class="c" style="left:614px;top:482px;width:71px;text-align:right;padding-right:2px;"><span class="w" style="width:35px;transform:scaleX(0.9396)">87452</span></div>
<div class="c" style="left:686px;top:482px;width:84px;text-align:left;padding-left:2px;"><span class="w" style="width:25px;transform:scaleX(1.1197)">N/A</span></div>
<div class="c" style="left:771px;top:482px;width:136px;text-align:left;padding-left:2px;"><span class="w" style="width:61px;transform:scaleX(0.9524)">875632-96</span></div>
<div class="c" style="left:908px;top:482px;width:53px;text-align:center;padding-left:1px;"><span class="w" style="width:31px;transform:scaleX(0.8504)">TRUE</span></div>
<div class="c" style="left:27px;top:502px;width:105px;text-align:left;padding-left:2px;"><span class="w" style="width:22px;transform:scaleX(0.9846)">u16</span></div>
<div class="c" style="left:133px;top:502px;width:108px;text-align:left;padding-left:2px;"><span class="w" style="width:68px;transform:scaleX(0.9513)">853236-856</span></div>
<div class="c" style="left:242px;top:502px;width:65px;text-align:left;padding-left:2px;"><span class="w" style="width:43px;transform:scaleX(0.9026)">SOIC24</span></div>
<div class="c" style="left:308px;top:502px;width:251px;text-align:left;padding-left:2px;"><span class="w" style="width:25px;transform:scaleX(0.9598)">Fast</span> <span class="w" style="width:38px;transform:scaleX(1.0012)">NAND</span> <span class="w" style="width:29px;transform:scaleX(0.9989)">Gate</span> <span class="w" style="width:50px;transform:scaleX(0.9592)">Package</span></div>
<div class="c" style="left:560px;top:502px;width:53px;text-align:left;padding-left:2px;"><span class="w" style="width:27px;transform:scaleX(0.9552)">SMT</span></div>
<div class="c" style="left:614px;top:502px;width:71px;text-align:right;padding-right:2px;"><span class="w" style="width:35px;transform:scaleX(0.9396)">85236</span></div>
<div class="c" style="left:686px;top:502px;width:84px;text-align:left;padding-left:2px;"><span class="w" style="width:25px;transform:scaleX(1.1197)">N/A</span></div>
<div class="c" style="left:771px;top:502px;width:136px;text-align:left;padding-left:2px;"><span class="w" style="width:61px;transform:scaleX(0.9524)">98724-543</span></div>
<div class="c" style="left:908px;top:502px;width:53px;text-align:center;padding-left:1px;"><span class="w" style="width:31px;transform:scaleX(0.8504)">TRUE</span></div>
<div class="c" style="left:27px;top:522px;width:105px;text-align:left;padding-left:2px;"><span class="w" style="width:23px;transform:scaleX(0.9358)">U10</span></div>
<div class="c" style="left:133px;top:522px;width:108px;text-align:left;padding-left:2px;"><span class="w" style="width:61px;transform:scaleX(0.9524)">851212-96</span></div>
<div class="c" style="left:242px;top:522px;width:65px;text-align:left;padding-left:2px;"><span class="w" style="width:43px;transform:scaleX(0.9026)">SOIC20</span></div>
<div class="c" style="left:308px;top:522px;width:251px;text-align:left;padding-left:2px;"><span class="w" style="width:25px;transform:scaleX(0.9598)">Fast</span> <span class="w" style="width:26px;transform:scaleX(0.8956)">XOR</span> <span class="w" style="width:29px;transform:scaleX(0.9989)">Gate</span></div>
<div class="c" style="left:560px;top:522px;width:53px;text-align:left;padding-left:2px;"><span class="w" style="width:27px;transform:scaleX(0.9552)">SMT</span></div>
<div class="c" style="left:614px;top:522px;width:71px;text-align:right;padding-right:2px;"><span class="w" style="width:35px;transform:scaleX(0.9396)">77995</span></div>
<div class="c" style="left:686px;top:522px;width:84px;text-align:left;padding-left:2px;"><span class="w" style="width:25px;transform:scaleX(1.1197)">N/A</span></div>
<div class="c" style="left:771px;top:522px;width:136px;text-align:left;padding-left:2px;"><span class="w" style="width:61px;transform:scaleX(0.9524)">8975-8513</span></div>
<div class="c" style="left:908px;top:522px;width:53px;text-align:center;padding-left:1px;"><span class="w" style="width:31px;transform:scaleX(0.8504)">TRUE</span></div>
<div style="left:26px;top:20px;width:935px;height:2px;background:#217346"></div>
<div style="left:25px;top:40px;width:936px;height:2px;background:#217346"></div>
<div style="left:25px;top:61px;width:936px;height:2px;background:#217346"></div>
<div style="left:25px;top:40px;width:2px;height:22px;background:#217346"></div>
<div style="left:27px;top:58px;width:5px;height:6px;background:#fff"></div>
<div style="left:25px;top:59px;width:6px;height:5px;background:#217346"></div>
<div style="left:0;top:0;width:984px;height:2px;background:#505050"></div>
<div style="left:961px;top:0;width:23px;height:545px;background:#505050"></div>
<div style="left:964px;top:2px;width:17px;height:539px;background:#404040;border-radius:8.5px"></div>
<svg style="left:964px;top:2px" width="17" height="540" viewBox="0 0 17 540"><polygon points="8.5,4.5 13.2,11.6 3.8,11.6" fill="#c8c8c8"/><polygon points="8.5,535.5 13.2,528.4 3.8,528.4" fill="#c8c8c8"/></svg>
<div style="left:968px;top:19px;width:9px;height:483px;background:#c8c8c8;border-radius:4.5px"></div>
<div style="left:0;top:539px;width:984px;height:33px;background:#505050"></div>
<div style="left:113px;top:539px;width:79px;height:4px;background:#fff"></div>
<div style="left:109px;top:539px;width:8px;height:8px;background:#505050;border-top-right-radius:3px"></div>
<div style="left:188px;top:539px;width:8px;height:8px;background:#505050;border-top-left-radius:3px"></div>
<div style="left:117px;top:539px;width:71px;height:28px;background:#fff;border-radius:0 0 3.5px 3.5px"></div>
<div style="left:125.1px;top:541.4px;height:22px;line-height:22px;font-size:13.4px;color:#262626;-webkit-text-stroke:0.4px #262626;white-space:pre;font-kerning:none;word-spacing:0"><span class="w" style="width:31px;transform:scaleX(1.0159)">BOM</span><span class="w" style="width:20px;margin-left:4px;transform:scaleX(0.8951)">101</span></div>
<div style="left:125px;top:562px;width:55px;height:2px;background:#1e7a45"></div>
<div style="left:192px;top:546px;width:1px;height:18px;background:#8f8f8f"></div>
<svg style="left:26px;top:548px" width="46" height="14" viewBox="0 0 46 14"><path d="M9.3 2.1 L3.6 6.5 L9.3 10.9" fill="none" stroke="#9a9a9a" stroke-width="1.1"/><path d="M36.7 2.1 L42.4 6.5 L36.7 10.9" fill="none" stroke="#9a9a9a" stroke-width="1.1"/></svg>
<svg style="left:234px;top:548px" width="13" height="13" viewBox="0 0 13 13"><path d="M6.5 1 V12 M1 6.5 H12" stroke="#d0d0d0" stroke-width="1" fill="none"/></svg>
<div style="left:592px;top:551px;width:2px;height:2px;background:#ececec"></div>
<div style="left:592px;top:555px;width:2px;height:2px;background:#ececec"></div>
<div style="left:592px;top:559px;width:2px;height:2px;background:#ececec"></div>
<div style="left:609px;top:546px;width:355px;height:17px;background:#404040;border-radius:8.5px"></div>
<svg style="left:609px;top:546px" width="355" height="17" viewBox="0 0 355 17"><polygon points="4.5,8.5 11.6,3.8 11.6,13.2" fill="#c8c8c8"/><polygon points="350.5,8.5 343.4,3.8 343.4,13.2" fill="#c8c8c8"/></svg>
<div style="left:626px;top:550px;width:298px;height:9px;background:#c8c8c8;border-radius:4.5px"></div>
<div style="left:0;top:571px;width:984px;height:1px;background:#3a3a3a"></div>
<div style="left:0;top:572px;width:984px;height:21px;background:#505050"></div>
<div style="left:672px;top:572px;width:40px;height:21px;background:#5e5e5e"></div>
<div class="st" style="left:12px;letter-spacing:0.119px">Ready</div>
<div class="st" style="left:80px;letter-spacing:0.411px">Accessibility: Good to go</div>
<div class="st" style="left:453.7px;letter-spacing:0.128px">Average: 1004</div>
<div class="st" style="left:540.6px;letter-spacing:0.549px">Count: 9</div>
<div class="st" style="left:600.6px;letter-spacing:0.066px">Sum: 1004</div>
<div class="st" style="left:937px;letter-spacing:0.039px">100%</div>
<svg style="left:62px;top:574px" width="17" height="16" viewBox="0 0 17 16" fill="none" stroke="#f2f2f2" stroke-width="1.15" stroke-linecap="round" stroke-linejoin="round"><circle cx="6.9" cy="2.9" r="1.65"/><path d="M1.3 5.5 Q1.1 3.9 2.3 3.9 Q3.6 3.9 4.4 4.4 L6.9 5.6 L9.4 4.4 Q10.2 3.9 11.5 3.9 Q12.9 3.9 12.7 5.5"/><path d="M4.4 5.7 L3.9 10 Q3.6 12.6 2.8 13.4 Q3.4 14.6 5.8 14.1 M9.45 5.7 V9.6"/><path d="M7.4 11.8 L10.26 14.6 L15.75 9.2"/></svg>
<svg style="left:685px;top:575px" width="14" height="14" viewBox="0 0 14 14" fill="none" stroke="#f2f2f2" stroke-width="1"><path d="M0.5 0.5 H12.5 V12.5 H0.5 Z M4.5 0.5 V12.5 M8.5 0.5 V12.5 M0.5 4.5 H12.5 M0.5 8.5 H12.5"/></svg>
<svg style="left:725px;top:575px" width="14" height="13" viewBox="0 0 14 13" fill="none" stroke="#f2f2f2" stroke-width="1"><rect x="0.5" y="0.5" width="13" height="12" fill="#424242"/><rect x="3.5" y="2.5" width="7" height="8" fill="#505050"/><path d="M5 4.5 H9 M5 6.5 H9 M5 8.5 H9"/></svg>
<svg style="left:765px;top:575px" width="14" height="13" viewBox="0 0 14 13" fill="none"><rect x="0.5" y="0.5" width="13" height="12" fill="#4a4a4a" stroke="#f2f2f2"/><rect x="1" y="1" width="8.4" height="7" fill="#f2f2f2"/><rect x="1.2" y="1" width="2.3" height="5.8" fill="#444"/><rect x="5.4" y="1" width="2.6" height="5.8" fill="#444"/></svg>
<div style="left:798px;top:581px;width:8px;height:1px;background:#e0e0e0"></div>
<div style="left:811px;top:582px;width:100px;height:1px;background:#b0b0b0"></div>
<div style="left:859px;top:577px;width:5px;height:11px;background:#d0d0d0"></div>
<div style="left:916px;top:581px;width:8px;height:1px;background:#e0e0e0"></div>
<div style="left:919.5px;top:578px;width:1px;height:8px;background:#e0e0e0"></div>
<div style="left:0;top:0;width:1px;height:594px;background:#a0a0a0"></div>
<div style="left:983px;top:0;width:1px;height:594px;background:#a0a0a0"></div>
<div style="left:0;top:593px;width:984px;height:1px;background:#a0a0a0"></div>
</div></body></html>
